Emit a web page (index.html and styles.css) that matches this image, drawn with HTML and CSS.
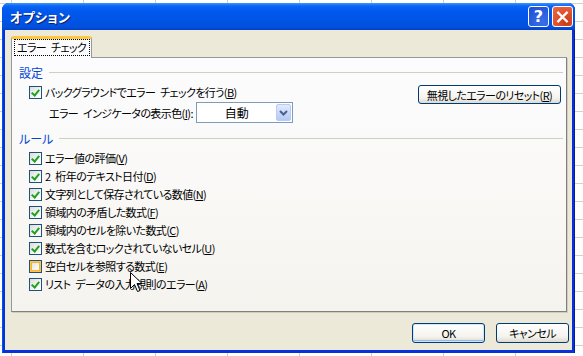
FILE: index.html
```html
<html>
<head>
	<title>オプション</title>
	<link rel="stylesheet" href="styles.css">
</head>
<body>
	<div class="dialog">
		<div class="titlebar">
			<div class="title">オプション</div>
			<div class="cap-btn help">?</div>
			<div class="cap-btn close">
				<svg width="20" height="20" viewBox="0 0 20 20">
					<path d="M5.5 5.5 L14.5 14.5 M14.5 5.5 L5.5 14.5" stroke="white" stroke-width="2.4" stroke-linecap="square"></path>
				</svg>
			</div>
		</div>

		<div class="client">
			<div class="tabs">
				<div class="tab"><span class="focus">エラー チェック</span></div>
			</div>

			<div class="panel">
				<div class="group-head"><span>設定</span><div class="rule"></div></div>

				<div class="row first">
					<span class="check on"></span>
					<span class="label">バックグラウンドでエラー チェックを行う(<u>B</u>)</span>
					<div class="push reset">無視したエラーのリセット(<u>R</u>)</div>
				</div>

				<div class="row color-row">
					<span class="label">エラー インジケータの表示色(<u>I</u>):</span>
					<div class="combo">
						<span class="combo-text">自動</span>
						<span class="combo-btn">
							<svg width="9" height="6" viewBox="0 0 9 6"><path d="M1 1 L4.5 4.5 L8 1" stroke="#4d6185" stroke-width="2" fill="none"></path></svg>
						</span>
					</div>
				</div>

				<div class="group-head second"><span>ルール</span><div class="rule"></div></div>

				<div class="rules">
					<div class="row"><span class="check on"></span><span class="label">エラー値の評価(<u>V</u>)</span></div>
					<div class="row"><span class="check on"></span><span class="label">2 桁年のテキスト日付(<u>D</u>)</span></div>
					<div class="row"><span class="check on"></span><span class="label">文字列として保存されている数値(<u>N</u>)</span></div>
					<div class="row"><span class="check on"></span><span class="label">領域内の矛盾した数式(<u>F</u>)</span></div>
					<div class="row"><span class="check on"></span><span class="label">領域内のセルを除いた数式(<u>C</u>)</span></div>
					<div class="row"><span class="check on"></span><span class="label">数式を含むロックされていないセル(<u>U</u>)</span></div>
					<div class="row"><span class="check hover"></span><span class="label">空白セルを参照する数式(<u>E</u>)</span></div>
					<div class="row"><span class="check on"></span><span class="label">リスト データの入力規則のエラー(<u>A</u>)</span></div>
				</div>

				<!-- mouse pointer sits over the last rows -->
				<svg class="cursor" width="13" height="21" viewBox="0 0 13 21">
					<path d="M0.5 0.5 L0.5 16.5 L4.5 12.5 L7.5 19.5 L10 18.5 L7 11.5 L12 11.5 Z" fill="white" stroke="black" stroke-width="1"></path>
				</svg>
			</div>

			<div class="footer">
				<div class="push ok">OK</div>
				<div class="push">キャンセル</div>
			</div>
		</div>
	</div>
</body>
</html>
```

FILE: styles.css
```css
html, body {
	margin: 0;
	padding: 0;
	width: 100%;
	height: 100%;
	overflow: hidden;
}

body {
	background-color: #ffffff;
	background-image:
		repeating-linear-gradient(to right, transparent 0, transparent 41px, #d4d0c8 41px, #d4d0c8 42px, transparent 42px, transparent 72px),
		repeating-linear-gradient(to bottom, transparent 0, transparent 16px, #d4d0c8 16px, #d4d0c8 17px, transparent 17px, transparent 18px);
	background-size: 72px 18px;
	background-position: 42px 0, 0 5px;
	font-family: "Noto Sans CJK JP", sans-serif;
	font-size: 11px;
	letter-spacing: -0.6px;
	word-spacing: 3px;
	font-feature-settings: "palt";
	color: #000;
}

.dialog {
	margin: 3px 0 0 2px;
	width: 573px;
	height: 350px;
	box-sizing: border-box;
	display: flex;
	flex-direction: column;
	background: #0831d9;
	border-radius: 7px 7px 0 0;
	padding: 0 3px 3px 3px;
	box-shadow: inset 1px 0 0 #0054e3, inset -1px 0 0 #001ea0;
}

.titlebar {
	height: 27px;
	margin: 0 -3px;
	padding: 0 2px 0 8px;
	display: flex;
	align-items: center;
	border-radius: 7px 7px 0 0;
	background: linear-gradient(to bottom, #3d95ff 0, #0a66f5 3px, #0058ee 8px, #0054e3 18px, #0250de 24px, #0341c8 27px);
}

.title {
	flex: 1;
	color: #fff;
	font-weight: bold;
	font-size: 13px;
	text-shadow: 1px 1px 0 #0a1e6e;
	letter-spacing: 0.3px;
}

.cap-btn {
	width: 19px;
	height: 19px;
	border: 1px solid #fff;
	border-radius: 3px;
	display: flex;
	align-items: center;
	justify-content: center;
	margin-left: 3px;
	box-sizing: content-box;
}

.help {
	background: radial-gradient(circle at 70% 80%, #3b6fe8 0, #2a5fe0 50%, #1d4dd3 100%);
	color: #fff;
	font-family: "DejaVu Sans", sans-serif;
	font-weight: bold;
	font-size: 16px;
	letter-spacing: 0;
}

.close {
	background: radial-gradient(circle at 70% 80%, #c7391a 0, #e0522e 50%, #e86a48 100%);
}

.client {
	flex: 1;
	background: #ece9d8;
	display: flex;
	flex-direction: column;
	padding: 6px 2px 0 6px;
}

.tabs {
	display: flex;
	height: 21px;
	position: relative;
	z-index: 1;
}

.tab {
	width: 81px;
	height: 22px;
	box-sizing: border-box;
	border: 1px solid #919b9c;
	border-top: 3px solid #ffc83c;
	border-bottom: none;
	border-radius: 3px 3px 0 0;
	background: #fcfcfe;
	padding: 1px 0 0 3px;
	white-space: nowrap;
}

.focus {
	display: inline-block;
	outline: 1px dotted #000;
	padding: 0 3px 0 2px;
	line-height: 15px;
}

.panel {
	height: 255px;
	width: 556px;
	box-sizing: border-box;
	border: 1px solid #919b9c;
	border-right-color: #808080;
	border-bottom-color: #808080;
	box-shadow: 1px 1px 0 #d0cdbe;
	background: linear-gradient(to bottom, #fcfcfe 0, #f9f8f5 60%, #f4f3ee 100%);
	padding: 6px 0 0 7px;
	position: relative;
}

.group-head {
	display: flex;
	align-items: center;
	height: 16px;
	color: #0046d5;
	font-size: 12px;
	letter-spacing: 0;
}

.group-head.second {
	margin-top: 7px;
}

.rule {
	flex: 1;
	height: 0;
	border-top: 1px solid #d0d0bf;
	margin: 1px 3px 0 6px;
}

.row {
	display: flex;
	align-items: center;
	height: 18px;
	padding-left: 10px;
}

.row.first {
	margin-top: 3px;
}

.rules {
	margin-top: 3px;
}

.label {
	white-space: nowrap;
	line-height: 14px;
}

u {
	text-decoration: underline;
	text-underline-offset: 1px;
}

.check {
	width: 13px;
	height: 13px;
	flex: none;
	box-sizing: border-box;
	border: 1px solid #1c5180;
	background: linear-gradient(135deg, #dcdcd7 0, #f5f5f3 60%, #ffffff 100%);
	margin-right: 3px;
	position: relative;
}

.check.on::after {
	content: "";
	position: absolute;
	left: 3px;
	top: 1px;
	width: 3px;
	height: 6px;
	border-right: 2px solid #21a121;
	border-bottom: 2px solid #21a121;
	transform: rotate(40deg);
}

.check.hover {
	box-shadow: inset 0 0 0 1px #fcc74c, inset 0 0 0 2px #f8b330;
}

.push {
	height: 19px;
	box-sizing: border-box;
	border: 1px solid #003c74;
	border-radius: 3px;
	background: linear-gradient(to bottom, #ffffff 0, #f4f3ee 70%, #dcdad0 100%);
	display: flex;
	align-items: center;
	justify-content: center;
	white-space: nowrap;
}

.reset {
	margin-left: auto;
	margin-right: 5px;
	width: 143px;
	align-self: flex-start;
	margin-top: 2px;
}

.color-row {
	height: 21px;
	padding-left: 30px;
	margin-top: 1px;
}

.combo {
	margin-left: 3px;
	width: 97px;
	height: 21px;
	box-sizing: border-box;
	border: 1px solid #7f9db9;
	background: #fff;
	display: flex;
	align-items: stretch;
	padding: 1px;
}

.combo-text {
	flex: 1;
	text-align: center;
	line-height: 17px;
	font-size: 12px;
	letter-spacing: 0;
}

.combo-btn {
	width: 15px;
	border-radius: 2px;
	border: 1px solid #b9cbf5;
	box-sizing: border-box;
	background: linear-gradient(to bottom, #e2eafe 0, #c5d5fb 60%, #b5c8f7 100%);
	display: flex;
	align-items: center;
	justify-content: center;
}

.cursor {
	position: absolute;
	left: 118px;
	top: 214px;
}

.footer {
	display: flex;
	justify-content: flex-end;
	margin-top: 11px;
	padding-right: 1px;
	gap: 11px;
}

.footer .push {
	width: 73px;
	height: 20px;
}

.ok {
	box-shadow: inset 0 0 0 1px #cee7ff, inset 0 -1px 0 1px #98b8ea;
}
```
